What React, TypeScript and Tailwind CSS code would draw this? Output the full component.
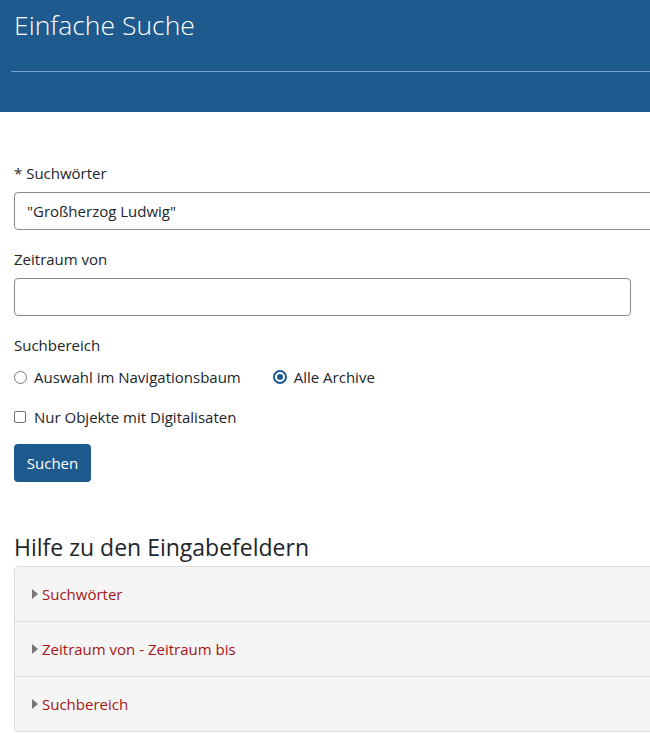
import React from "react";

const helpItems = ["Suchwörter", "Zeitraum von - Zeitraum bis", "Suchbereich"];

const App: React.FC = () => {
  return (
    <div
      className="w-[650px] h-[750px] overflow-hidden bg-white text-[#212529]"
      style={{ fontFamily: '"Open Sans", "Noto Sans", sans-serif' }}
    >
      <header className="h-[112px] bg-[#1f5a8e] pl-[11px]">
        <h1 className="pl-[3px] pt-[6px] text-[26.5px] leading-[38px] font-light text-white">
          Einfache Suche
        </h1>
        <div className="mt-[27px] h-px w-[700px] bg-[#7ca3cc]" />
      </header>

      <main className="px-[14px] pt-[50px] text-[15px]">
        <label className="block leading-[22px]">* Suchwörter</label>
        <div className="mt-[8px] flex h-[38px] w-[700px] items-center rounded-[4px] border border-[#8a8a8a] px-[12px]">
          "Großherzog Ludwig"
        </div>

        <label className="mt-[18px] block leading-[22px]">Zeitraum von</label>
        <div className="mt-[8px] h-[38px] w-[617px] rounded-[4px] border border-[#8a8a8a]" />

        <div className="mt-[18px] leading-[22px]">Suchbereich</div>
        <div className="mt-[10px] flex items-center leading-[22px]">
          <span className="h-[13px] w-[13px] rounded-full border-[1.5px] border-[#7a7a7a]" />
          <span className="ml-[7px]">Auswahl im Navigationsbaum</span>
          <span className="ml-[32px] flex h-[14px] w-[14px] items-center justify-center rounded-full border-2 border-[#1f5a8e]">
            <span className="h-[6px] w-[6px] rounded-full bg-[#1f5a8e]" />
          </span>
          <span className="ml-[7px]">Alle Archive</span>
        </div>

        <div className="mt-[18px] flex items-center leading-[22px]">
          <span className="h-[12px] w-[12px] rounded-[2px] border-[1.5px] border-[#6f6f6f]" />
          <span className="ml-[8px]">Nur Objekte mit Digitalisaten</span>
        </div>

        <button className="mt-[16px] h-[38px] w-[77px] rounded-[4px] bg-[#1f5a8e] text-white">
          Suchen
        </button>

        <h2 className="mt-[50px] text-[23px] leading-[30px] text-[#212529]">
          Hilfe zu den Eingabefeldern
        </h2>
        <div className="mt-[4px] w-[700px] overflow-hidden rounded-[4px] border border-[#dddddd] bg-[#f5f5f5]">
          {helpItems.map((item, i) => (
            <div
              key={item}
              className={`flex items-center pl-[17px] ${i > 0 ? "h-[55px] border-t border-[#dddddd]" : "h-[54px]"}`}
            >
              <svg width="7" height="10" viewBox="0 0 7 10" className="mr-[3px]">
                <path d="M0 0 L6 5 L0 10 Z" fill="#777777" />
              </svg>
              <span className="text-[#a31515]">{item}</span>
            </div>
          ))}
        </div>
      </main>
    </div>
  );
};

export default App;
